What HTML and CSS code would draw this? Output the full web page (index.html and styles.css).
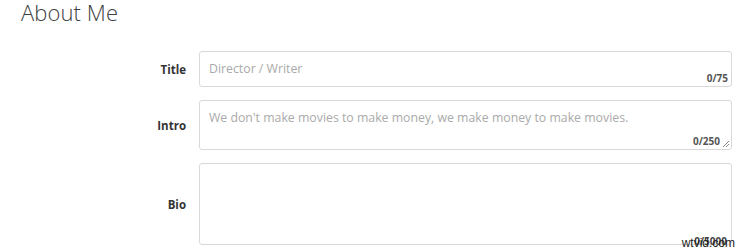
FILE: index.html
```html
<!DOCTYPE html>
<html>
<head>
<meta charset="utf-8">
<link rel="stylesheet" href="styles.css">
</head>
<body>
<div class="page">
  <h1 class="heading">About Me</h1>
  <div class="form">
    <div class="row">
      <label class="label">Title</label>
      <div class="field field-title">
        <span class="placeholder">Director / Writer</span>
        <span class="counter">0/75</span>
      </div>
    </div>
    <div class="row">
      <label class="label">Intro</label>
      <div class="field field-intro">
        <span class="placeholder">We don't make movies to make money, we make money to make movies.</span>
        <span class="counter counter-grip">0/250</span>
        <svg class="grip" width="8" height="8" viewBox="0 0 8 8"><path d="M1 7 L7 1 M4 7 L7 4" stroke="#888" stroke-width="1" fill="none"/></svg>
      </div>
    </div>
    <div class="row">
      <label class="label">Bio</label>
      <div class="field field-bio">
        <span class="counter counter-bio">0/5000</span>
        <span class="watermark">wtvid.com</span>
      </div>
    </div>
  </div>
</div>
</body>
</html>
```
FILE: styles.css
```css
html, body {
  margin: 0;
  padding: 0;
  background: #fff;
}
body {
  font-family: "Open Sans", "Liberation Sans", sans-serif;
  overflow: hidden;
}
.page {
  width: 755px;
  height: 249px;
}
.heading {
  margin: 0;
  padding: 0 0 0 21px;
  font-family: "Open Sans", sans-serif;
  font-weight: 300;
  font-size: 22px;
  line-height: 24px;
  color: #404040;
  letter-spacing: 0.1px;
}
.form {
  margin-top: 27px;
  display: flex;
  flex-direction: column;
  gap: 13px;
}
.row {
  display: grid;
  grid-template-columns: 186px 533px;
  column-gap: 13px;
  align-items: center;
}
.label {
  text-align: right;
  font-weight: 700;
  font-size: 11.5px;
  color: #333;
}
.field {
  position: relative;
  box-sizing: border-box;
  border: 1px solid #d9d9d9;
  border-radius: 3px;
  background: #fff;
}
.field-title { height: 36px; }
.field-intro { height: 50px; }
.field-bio { height: 82px; }
.placeholder {
  display: block;
  padding: 8px 0 0 9px;
  font-size: 12.3px;
  line-height: 18px;
  color: #aaa;
}
.counter {
  position: absolute;
  right: 3px;
  bottom: 2px;
  font-size: 10px;
  font-weight: 700;
  color: #555;
  line-height: 12px;
}
.counter-grip {
  right: 11px;
}
.grip {
  position: absolute;
  right: 1px;
  bottom: 1px;
}
.counter-bio {
  right: 4px;
  bottom: -3px;
  color: #444;
}
.watermark {
  position: absolute;
  right: -4px;
  bottom: -6px;
  font-family: "Liberation Sans", sans-serif;
  font-size: 12px;
  color: #222;
  line-height: 14px;
}
```
